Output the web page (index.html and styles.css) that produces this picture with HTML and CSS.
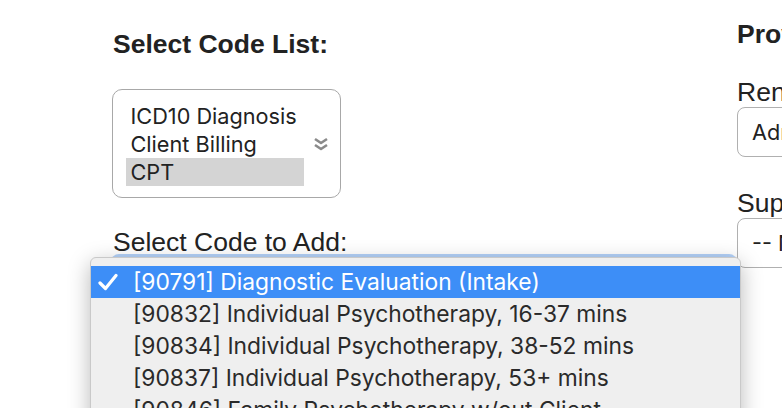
FILE: index.html
```html
<!DOCTYPE html>
<html>
<head>
<meta charset="utf-8">
<link rel="stylesheet" href="styles.css">
</head>
<body>
<div class="page">
  <div class="left">
    <h2 class="heading">Select Code List:</h2>
    <div class="listbox">
      <ul class="options">
        <li class="opt">ICD10 Diagnosis</li>
        <li class="opt">Client Billing</li>
        <li class="opt opt-sel">CPT</li>
      </ul>
      <svg class="chev" width="16" height="14" viewBox="0 0 16 14"><polyline points="2,2 8,6 14,2" fill="none" stroke="#8a8a8a" stroke-width="2.6" stroke-linejoin="round"/><polyline points="2,8 8,12 14,8" fill="none" stroke="#8a8a8a" stroke-width="2.6" stroke-linejoin="round"/></svg>
    </div>
    <label class="label">Select Code to Add:</label>
    <div class="select focused"></div>
  </div>
  <div class="right">
    <h2 class="heading heading-r">Provider Details</h2>
    <label class="label label-r1">Rendering Provider:</label>
    <div class="box">Administrator</div>
    <label class="label label-r2">Supervisor:</label>
    <div class="box">-- None --</div>
  </div>
</div>
<ul class="menu">
  <li class="item item-sel"><svg class="check" width="20" height="18" viewBox="0 0 20 18"><path d="M2 10 L7.5 15.5 L18 2.5" fill="none" stroke="#fff" stroke-width="3.2" stroke-linecap="round" stroke-linejoin="round"/></svg>[90791] Diagnostic Evaluation (Intake)</li>
  <li class="item">[90832] Individual Psychotherapy, 16-37 mins</li>
  <li class="item">[90834] Individual Psychotherapy, 38-52 mins</li>
  <li class="item">[90837] Individual Psychotherapy, 53+ mins</li>
  <li class="item">[90846] Family Psychotherapy w/out Client</li>
</ul>
</body>
</html>
```
FILE: styles.css
```css
html, body {
  margin: 0;
  padding: 0;
  overflow: hidden;
  background: #fff;
  width: 782px;
  height: 408px;
}
body {
  font-family: "Liberation Sans", Arial, sans-serif;
  color: #222;
  position: relative;
}
.page {
  display: flex;
  padding-left: 113px;
}
.left {
  width: 624px;
  flex: none;
  display: flex;
  flex-direction: column;
  align-items: flex-start;
  padding-top: 29px;
}
.right {
  flex: none;
  width: 300px;
  display: flex;
  flex-direction: column;
  padding-top: 19px;
}
.heading {
  margin: 0;
  font-size: 26.5px;
  line-height: 30px;
  font-weight: bold;
  white-space: nowrap;
}
.label {
  display: block;
  font-size: 26.5px;
  line-height: 30px;
  white-space: nowrap;
}
.listbox {
  margin-top: 30px;
  margin-left: -1px;
  width: 227px;
  height: 107px;
  border: 1.5px solid #a8a8a8;
  border-radius: 10px;
  display: flex;
  align-items: flex-start;
  font-family: Inter, "Noto Sans", sans-serif;
  font-size: 21.7px;
  color: #222;
}
.options {
  list-style: none;
  margin: 11.5px 0 0 12.5px;
  padding: 0;
  width: 178px;
}
.opt {
  height: 28px;
  line-height: 28px;
  padding-left: 5px;
  white-space: nowrap;
}
.opt-sel {
  background: #d4d4d4;
}
.chev {
  margin-left: 9px;
  margin-top: 47px;
}
.left .label {
  margin-top: 29px;
}
.select {
  width: 620px;
  height: 44px;
  border-radius: 6px;
  border: 1px solid #9abfee;
  box-shadow: 0 0 0 3px rgba(86, 152, 240, 0.45);
  background: #fff;
}
.label-r1 {
  margin-top: 28px;
}
.label-r2 {
  margin-top: 31px;
}
.box {
  height: 48px;
  width: 260px;
  border: 1.5px solid #b0b0b0;
  border-radius: 8px;
  font-family: Inter, "Noto Sans", sans-serif;
  font-size: 21.7px;
  line-height: 48px;
  padding-left: 14px;
  white-space: nowrap;
  color: #222;
}
.menu {
  position: absolute;
  left: 90px;
  top: 257px;
  width: 649px;
  height: 170px;
  margin: 0;
  padding: 8px 0 0 0;
  list-style: none;
  background: #efefef;
  border: 1px solid #c9c9c9;
  border-radius: 6px;
  box-shadow: 0 6px 22px rgba(0, 0, 0, 0.28);
  font-family: Inter, "Noto Sans", sans-serif;
  font-size: 22.8px;
  color: #2a2a2a;
}
.item {
  position: relative;
  height: 32px;
  line-height: 32px;
  padding-left: 42px;
  white-space: nowrap;
}
.item-sel {
  background: #3d8ef7;
  color: #fff;
}
.check {
  position: absolute;
  left: 7px;
  top: 7px;
}
```
